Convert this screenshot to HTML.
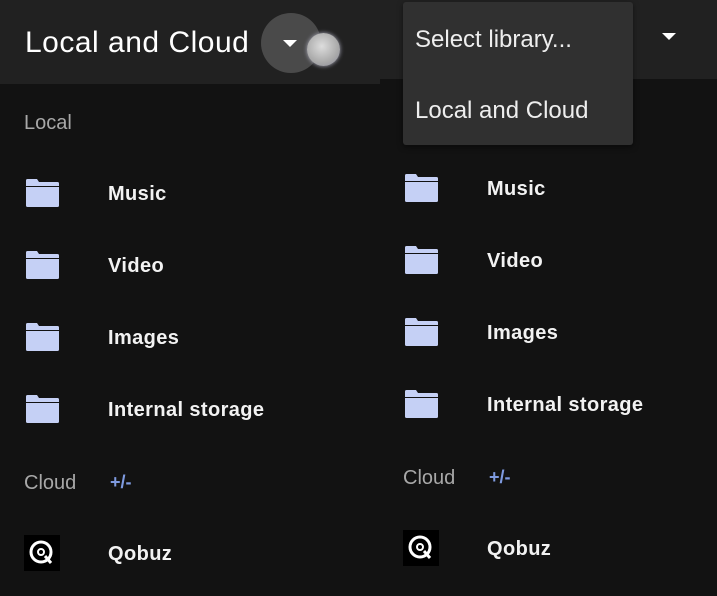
<!DOCTYPE html>
<html><head><meta charset="utf-8"><style>
*{margin:0;padding:0;box-sizing:border-box}
body{width:717px;height:596px;background:#121212;font-family:"Liberation Sans",sans-serif;position:relative;overflow:hidden;color:#fff}
.hdr{position:absolute;background:#212121}
.t{position:absolute;font-size:20px;font-weight:bold;color:#f2f2f2;letter-spacing:0.4px}
.lab{position:absolute;font-size:20px;color:#a8a8a8}
.pm{position:absolute;font-size:18px;color:#7f9be0;font-weight:bold}
.f{position:absolute;width:33px;height:28px}
.q{position:absolute;width:36px;height:36px;background:#000}
</style></head><body>
<div class="hdr" style="left:0;top:0;width:380px;height:84px"></div>
<div class="hdr" style="left:378px;top:0;width:339px;height:79px"></div>
<div style="position:absolute;left:25px;top:26px;font-size:30px;color:#fff;letter-spacing:0.5px">Local and Cloud</div>
<div style="position:absolute;left:261px;top:13px;width:60px;height:60px;border-radius:50%;background:#4a4a4a"></div>
<div style="position:absolute;left:283px;top:40px;border-left:7px solid transparent;border-right:7px solid transparent;border-top:7px solid #fff"></div>
<div style="position:absolute;left:307px;top:33px;width:33px;height:33px;border-radius:50%;background:radial-gradient(circle at 45% 40%,#ddd,#aaa 60%,#889);box-shadow:0 0 4px #aab"></div>
<div style="position:absolute;left:662px;top:33px;border-left:7px solid transparent;border-right:7px solid transparent;border-top:7px solid #fff"></div>
<div style="position:absolute;left:403px;top:2px;width:230px;height:143px;background:#303030;border-radius:3px;box-shadow:0 2px 6px rgba(0,0,0,.5)">
<div style="position:absolute;left:12px;top:24px;font-size:24px;color:#eee">Select library...</div>
<div style="position:absolute;left:12px;top:95px;font-size:24px;color:#eee">Local and Cloud</div>
</div>
<svg width="0" height="0" style="position:absolute"><defs>
<symbol id="fo" viewBox="0 0 33 28"><path d="M0 1.5Q0 0 1.5 0H11L13 3H31.5Q33 3 33 4.5V7H0Z" fill="#c5d0f5"/><path d="M0 8H33V26.5Q33 28 31.5 28H1.5Q0 28 0 26.5Z" fill="#c5d0f5"/></symbol>
<symbol id="qb" viewBox="0 0 36 36"><circle cx="17" cy="17" r="10" fill="none" stroke="#fff" stroke-width="3"/><circle cx="17" cy="17" r="3" fill="none" stroke="#fff" stroke-width="2"/><path d="M21 21L27 28" stroke="#fff" stroke-width="3"/></symbol>
</defs></svg>
<div class="lab" style="left:24px;top:112px">Local</div>
<svg class="f" style="left:26px;top:179px"><use href="#fo"/></svg><div class="t" style="left:108px;top:183px">Music</div>
<svg class="f" style="left:26px;top:251px"><use href="#fo"/></svg><div class="t" style="left:108px;top:255px">Video</div>
<svg class="f" style="left:26px;top:323px"><use href="#fo"/></svg><div class="t" style="left:108px;top:327px">Images</div>
<svg class="f" style="left:26px;top:395px"><use href="#fo"/></svg><div class="t" style="left:108px;top:399px">Internal storage</div>
<div class="lab" style="left:24px;top:472px">Cloud</div><div class="pm" style="left:110px;top:472px">+/-</div>
<svg class="q" style="left:24px;top:535px"><use href="#qb"/></svg><div class="t" style="left:108px;top:543px">Qobuz</div>

<svg class="f" style="left:405px;top:174px"><use href="#fo"/></svg><div class="t" style="left:487px;top:178px">Music</div>
<svg class="f" style="left:405px;top:246px"><use href="#fo"/></svg><div class="t" style="left:487px;top:250px">Video</div>
<svg class="f" style="left:405px;top:318px"><use href="#fo"/></svg><div class="t" style="left:487px;top:322px">Images</div>
<svg class="f" style="left:405px;top:390px"><use href="#fo"/></svg><div class="t" style="left:487px;top:394px">Internal storage</div>
<div class="lab" style="left:403px;top:467px">Cloud</div><div class="pm" style="left:489px;top:467px">+/-</div>
<svg class="q" style="left:403px;top:530px"><use href="#qb"/></svg><div class="t" style="left:487px;top:538px">Qobuz</div>
</body></html>
